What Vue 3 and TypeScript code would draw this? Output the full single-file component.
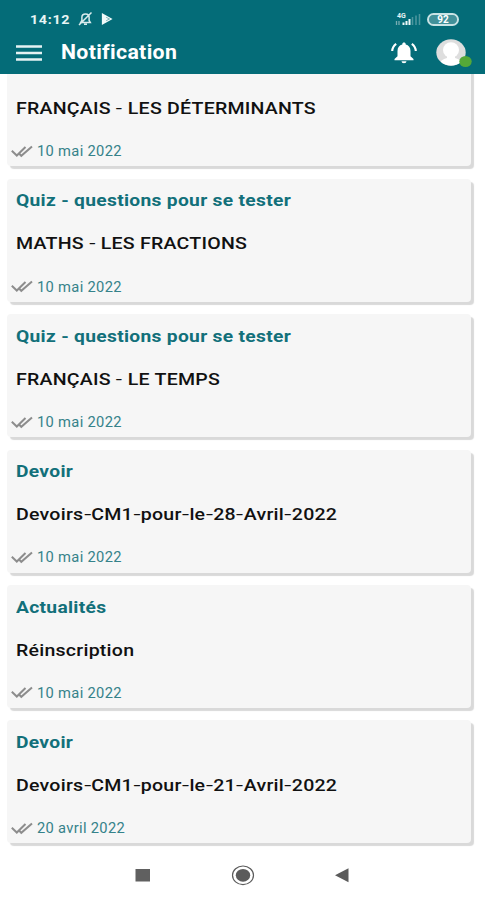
<script setup lang="ts">
interface Notice {
  id: number
  kind?: string
  title: string
  date: string
}

const notices: Notice[] = [
  { id: 1, title: 'FRANÇAIS - LES DÉTERMINANTS', date: '10 mai 2022' },
  { id: 2, kind: 'Quiz - questions pour se tester', title: 'MATHS - LES FRACTIONS', date: '10 mai 2022' },
  { id: 3, kind: 'Quiz - questions pour se tester', title: 'FRANÇAIS - LE TEMPS', date: '10 mai 2022' },
  { id: 4, kind: 'Devoir', title: 'Devoirs-CM1-pour-le-28-Avril-2022', date: '10 mai 2022' },
  { id: 5, kind: 'Actualités', title: 'Réinscription', date: '10 mai 2022' },
  { id: 6, kind: 'Devoir', title: 'Devoirs-CM1-pour-le-21-Avril-2022', date: '20 avril 2022' },
]

// Splits a label so that its hyphens can be set wider and lighter than its words.
function pieces(label: string): string[] {
  return label.split(/(-)/)
}
</script>

<template>
  <div class="screen">
    <header class="top">
      <div class="status">
        <span class="clock">14:12</span>
        <svg class="mute" viewBox="0 0 16 16">
          <path d="M3.200 11.500h9.600l-1.200-2V6.300C11.600 4.300 10 3 8 3S4.400 4.300 4.400 6.300v3.200zM6.500 13.300h3M1.500 14 14 1.500" />
        </svg>
        <svg class="play" viewBox="0 0 14 14">
          <path d="M1 0l12.500 7L1 14z" fill="#f1fafa" />
          <path d="M6 5l4 2-4 2" fill="none" stroke="#6fa9ae" stroke-width="1" />
        </svg>
        <span class="spacer"></span>
        <svg class="signal" viewBox="0 0 26 15">
          <text x="2" y="6" font-size="7" font-weight="700" fill="#e5f3f4">4G</text>
          <path d="M1.500 9v4M4 9v4" stroke="#78adb3" stroke-width="1.300" />
          <path d="M8.500 10.500v2.500M11.500 9v4M14.500 7v6" stroke="#eef8f8" stroke-width="2" />
          <path d="M17.500 5v8M21 3.500v9.500M24.500 2v11" stroke="#4d969e" stroke-width="1.500" />
        </svg>
        <span class="battery"><b>92</b></span>
      </div>
      <div class="bar">
        <svg class="menu" viewBox="0 0 26 16">
          <path d="M0 1.500h26M0 8h26M0 14.500h26" stroke="#e4f2f3" stroke-width="2.300" />
        </svg>
        <h1>Notification</h1>
        <span class="spacer"></span>
        <svg class="bell" viewBox="0 0 26 22">
          <path d="M13 .5c-1 0-1.700.6-1.700 1.500v.6C8.300 3.300 6.500 5.600 6.500 9v5.300L3.500 17v1.300h19V17l-3-2.700V9c0-3.400-1.800-5.700-4.800-6.400V2c0-.9-.7-1.500-1.700-1.500zM10.500 19.300a2.500 2 0 0 0 5 0z" fill="#fff" />
          <path d="M1.200 9C1.400 6 2.800 3.600 5.200 1.900M24.800 9c-.2-3-1.600-5.400-4-7.100" fill="none" stroke="#fff" stroke-width="2.100" />
        </svg>
        <svg class="avatar" viewBox="0 0 37 28">
          <defs><clipPath id="face"><ellipse cx="15" cy="13.500" rx="14.500" ry="13" /></clipPath></defs>
          <ellipse cx="15" cy="13.500" rx="14.700" ry="13.200" fill="#dedede" />
          <g clip-path="url(#face)" fill="#fff">
            <ellipse cx="15" cy="11" rx="8" ry="7.800" />
            <path d="M11 14h8v5c3 1 6 2 7 5v5H4v-5c1-3 4-4 7-5z" />
          </g>
          <ellipse cx="29.500" cy="22.500" rx="6.200" ry="5.500" fill="#54a838" />
        </svg>
      </div>
    </header>

    <main class="feed">
      <article v-for="n in notices" :key="n.id" class="card">
        <h2><span v-if="n.kind" class="wide">{{ n.kind }}</span></h2>
        <p class="title" :class="{ joined: !n.title.includes(' ') }">
          <span class="wide"><template v-for="(p, i) in pieces(n.title)" :key="i"><span v-if="p === '-'" class="hyphen">-</span><template v-else>{{ p }}</template></template></span>
        </p>
        <div class="meta">
          <svg class="ticks" viewBox="0 0 22 13">
            <path d="M.8 5.800l5 4.700L14.500 2M8.500 9l1.800 1.800L21 1.500" />
          </svg>
          <span class="wide">{{ n.date }}</span>
        </div>
      </article>
    </main>

    <nav class="keys">
      <svg viewBox="0 0 24 22"><rect x="4.500" y="5" width="14.500" height="12.500" fill="#606060" /></svg>
      <svg viewBox="0 0 24 22">
        <ellipse cx="12" cy="11.300" rx="10.500" ry="9.300" fill="none" stroke="#5b5b5b" stroke-width="1.200" />
        <ellipse cx="12" cy="11.300" rx="7.200" ry="6.400" fill="#5b5b5b" />
      </svg>
      <svg viewBox="0 0 24 22"><path d="M4 11.300 17.500 4.300v14z" fill="#5b5b5b" /></svg>
    </nav>
  </div>
</template>

<style>
body {
  background: #fff;
}
</style>

<style scoped>
.screen {
  width: 485px;
  height: 900px;
  overflow: hidden;
  display: flex;
  flex-direction: column;
  background: #fff;
  font-family: Roboto, "Liberation Sans", sans-serif;
}
.top {
  flex: none;
  height: 74px;
  box-sizing: border-box;
  padding-top: 9px;
  background: #046c78;
  color: #fff;
}
.status {
  display: flex;
  align-items: center;
  height: 20px;
  padding: 0 26px 0 30px;
}
.clock {
  width: 47px;
  font-size: 13px;
  font-weight: 700;
  letter-spacing: .6px;
  color: #e8f5f5;
  white-space: nowrap;
  transform: scaleX(1.1);
  transform-origin: left center;
}
.mute {
  width: 17px;
  height: 16px;
  fill: none;
  stroke: #d8ebed;
  stroke-width: 1.500;
}
.play {
  width: 14px;
  height: 12px;
  margin-left: 6px;
}
.spacer {
  flex: 1;
}
.signal {
  width: 26px;
  height: 15px;
  margin-right: 6px;
}
.battery {
  box-sizing: border-box;
  width: 32px;
  height: 13px;
  border: 2px solid #c8e3e5;
  border-radius: 7px;
  display: flex;
  align-items: center;
  justify-content: center;
  font-size: 10px;
  line-height: 9px;
  background: #41919a;
  background-clip: content-box;
}
.bar {
  display: flex;
  align-items: center;
  height: 47px;
  padding: 0 12px 0 16px;
}
.menu {
  width: 26px;
  height: 16px;
}
h1 {
  margin: 0 0 0 19px;
  font-size: 19.500px;
  font-weight: 700;
  letter-spacing: .3px;
  line-height: 24px;
  transform: scaleX(1.09);
  transform-origin: left center;
}
.bell {
  width: 26px;
  height: 22px;
  margin-right: 19px;
}
.avatar {
  width: 37px;
  height: 28px;
}
.feed {
  flex: none;
  height: 776px;
  overflow: hidden;
  display: flex;
  flex-direction: column;
  justify-content: flex-end;
  gap: 12.400px;
  padding: 0 14px 0 7px;
}
.card {
  flex: none;
  box-sizing: border-box;
  height: 123px;
  padding: 9.500px 9px 0 8.500px;
  border-radius: 4px;
  background: #f6f6f6;
  box-shadow: 3px 3px 1px #d9d9d9;
}
.card:last-child {
  margin-bottom: 6.600px;
}
.wide {
  display: inline-block;
  white-space: nowrap;
  transform: scaleX(1.13);
  transform-origin: left center;
}
.hyphen {
  display: inline-block;
  margin: 0 .500px;
  font-weight: 400;
  transform: scaleX(1.15);
}
.joined .hyphen {
  margin: 0 .970px;
  transform: scaleX(1.3);
}
h2 {
  height: 24px;
  margin: 0;
  font-size: 17px;
  font-weight: 700;
  letter-spacing: .270px;
  line-height: 24px;
  color: #12707a;
}
.title {
  margin: 19px 0 0 .500px;
  font-size: 17px;
  font-weight: 500;
  letter-spacing: .2px;
  line-height: 24px;
  color: #111;
}
.title .wide {
  transform: scaleX(1.15);
}
.meta {
  display: flex;
  align-items: center;
  height: 20px;
  margin: 21.300px 0 0 -4.500px;
  gap: 4px;
  font-size: 14px;
  letter-spacing: .3px;
  color: #35828a;
}
.meta .wide {
  transform: scaleX(1.05);
}
.ticks {
  width: 22px;
  height: 13px;
  fill: none;
  stroke: #8d8d8d;
  stroke-width: 2;
}
.keys {
  display: flex;
  height: 50px;
  align-items: center;
  justify-content: center;
  gap: 76px;
}
.keys svg {
  width: 24px;
  height: 22px;
}
</style>
